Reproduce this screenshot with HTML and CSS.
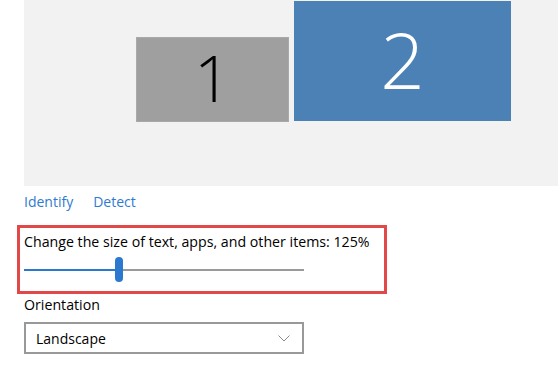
FILE: index.html
```html
<!DOCTYPE html>
<html lang="en">
<head>
    <meta charset="UTF-8">
    <meta name="viewport" content="width=device-width, initial-scale=1.0">
    <title>Display</title>
    <link rel="stylesheet" href="styles.css">
</head>
<body>
    <div class="page">
        <!-- Monitor arrangement -->
        <div class="arrange">
            <div class="monitor monitor-one">1</div>
            <div class="monitor monitor-two">2</div>
        </div>

        <div class="links">
            <a href="#">Identify</a>
            <a href="#">Detect</a>
        </div>

        <!-- Scaling -->
        <div class="scale-box">
            <div class="label">Change the size of text, apps, and other items: 125%</div>
            <div class="slider">
                <div class="track-fill"></div>
                <div class="thumb"></div>
                <div class="track-rest"></div>
            </div>
        </div>

        <!-- Orientation -->
        <div class="label orientation-label">Orientation</div>
        <div class="dropdown">
            <span>Landscape</span>
            <svg class="chevron" width="12" height="7" viewBox="0 0 12 7">
                <polyline points="0.5,0.5 6,6 11.5,0.5" fill="none" stroke="#8a8a8a" stroke-width="1"/>
            </svg>
        </div>
    </div>
</body>
</html>
```

FILE: styles.css
```css
body {
    margin: 0;
    padding: 0;
    background-color: #fff;
    font-family: "Open Sans", "Noto Sans", Arial, sans-serif;
    color: #000;
}

.page {
    width: 558px;
    height: 373px;
    overflow: hidden;
}

.arrange {
    position: relative;
    margin-left: 24px;
    height: 186px;
    background-color: #f2f2f2;
}

.monitor {
    position: absolute;
    display: flex;
    justify-content: center;
    align-items: center;
    font-weight: 300;
    line-height: 1;
}

.monitor-one {
    left: 112px;
    top: 37px;
    width: 153px;
    height: 85px;
    background-color: #9f9f9f;
    box-shadow: inset 0 0 0 1px #a9a9a9;
    color: #000;
    font-size: 65px;
    padding-bottom: 4px;
    box-sizing: border-box;
}

.monitor-two {
    left: 270px;
    top: 1px;
    width: 217px;
    height: 120px;
    background-color: #4c81b5;
    color: #fff;
    font-size: 78px;
    padding-bottom: 4px;
    box-sizing: border-box;
}

.links {
    display: flex;
    gap: 20px;
    margin: 6px 0 0 24px;
    font-size: 14px;
    line-height: 20px;
}

.links a {
    color: #2e7bcf;
    text-decoration: none;
}

.label {
    font-size: 14.2px;
    line-height: 20px;
}

.scale-box {
    width: 360px;
    margin: 13px 0 0 17px;
    padding: 4px 0 9px 4px;
    border: 3px solid #e34848;
}

.slider {
    display: flex;
    align-items: center;
    width: 280px;
    height: 25px;
    margin-top: 5px;
}

.track-fill {
    width: 91px;
    height: 2px;
    background-color: #2b78cf;
}

.thumb {
    width: 8px;
    height: 25px;
    border-radius: 4px;
    background-color: #2b78cf;
}

.track-rest {
    flex: 1;
    height: 2px;
    background-color: #9a9a9a;
}

.orientation-label {
    margin: 1px 0 0 24px;
}

.dropdown {
    display: flex;
    justify-content: space-between;
    align-items: center;
    box-sizing: border-box;
    width: 280px;
    height: 32px;
    margin: 7px 0 0 24px;
    padding: 0 12px 0 10px;
    border: 2px solid #999;
    font-size: 14px;
}

.chevron {
    display: block;
}
```
